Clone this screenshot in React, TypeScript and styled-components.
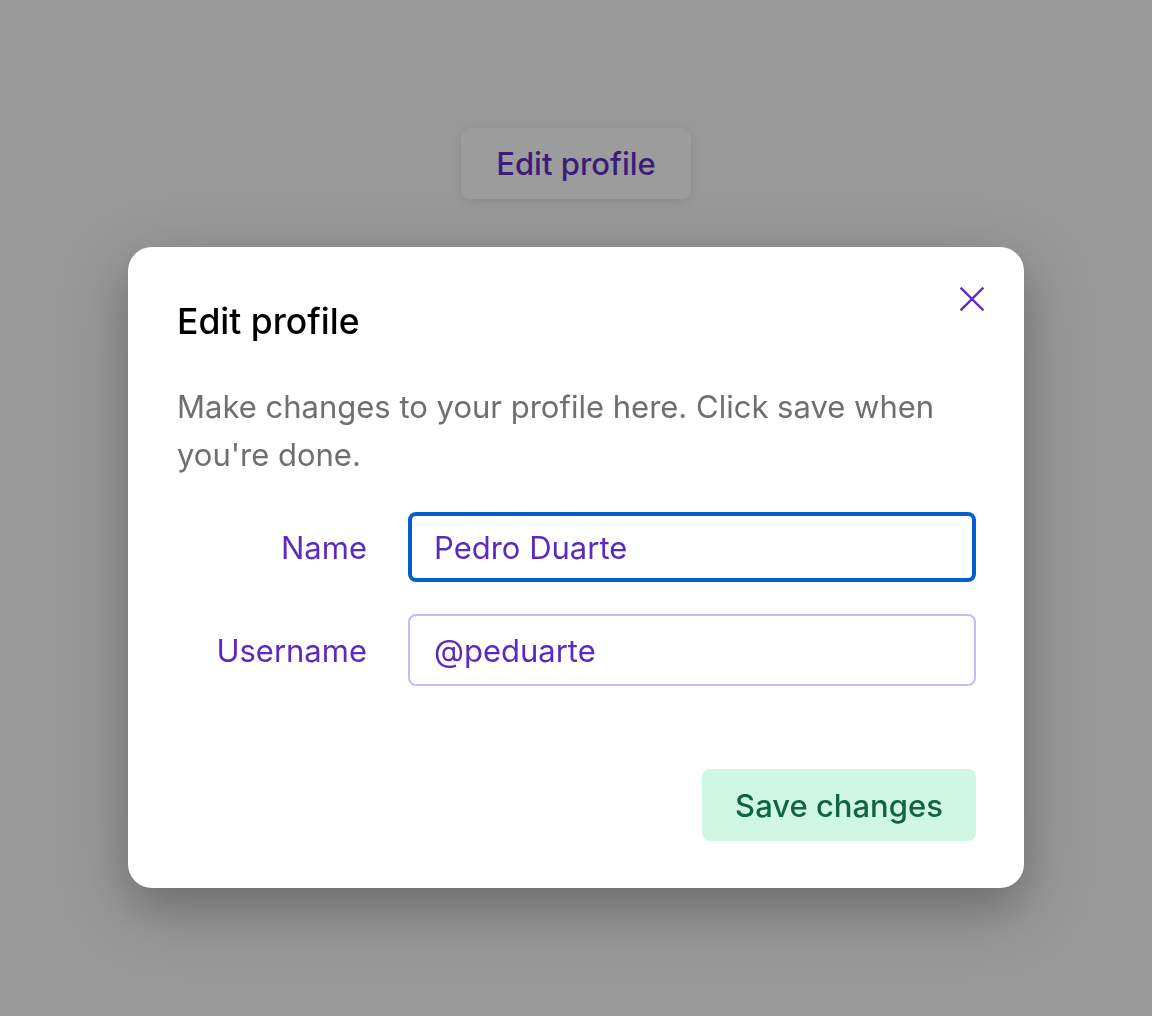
import React from "react";
import styled, { createGlobalStyle } from "styled-components";

const Global = createGlobalStyle`
  html, body { margin: 0; padding: 0; }
  body {
    background: #999999;
    font-family: Inter, "Noto Sans", sans-serif;
    width: 1152px;
    height: 1016px;
    overflow: hidden;
  }
  * { box-sizing: border-box; }
`;

const Page = styled.div`
  display: flex;
  justify-content: center;
  padding-top: 128px;
  height: 1016px;
`;

const Trigger = styled.button`
  height: 71px;
  width: 230px;
  padding: 0;
  border: none;
  border-radius: 9px;
  background: #9c9c9c;
  color: #3b1c78;
  font-family: inherit;
  font-size: 31px;
  font-weight: 500;
  box-shadow: 0 2px 10px rgba(0, 0, 0, 0.1);
  cursor: pointer;
`;

const Dialog = styled.div`
  position: fixed;
  left: 128px;
  top: 247px;
  width: 896px;
  height: 641px;
  background: #ffffff;
  border-radius: 24px;
  padding: 50px 48px 47px 49px;
  box-shadow: 0 20px 70px rgba(0, 0, 0, 0.22), 0 20px 40px rgba(0, 0, 0, 0.12);
  display: flex;
  flex-direction: column;
`;

const Title = styled.h2`
  margin: 0;
  font-size: 35.5px;
  font-weight: 500;
  line-height: 50px;
  color: #000000;
`;

const Description = styled.p`
  margin: 36px 0 33px;
  font-size: 31px;
  line-height: 48px;
  color: #6f6f6f;
`;

const Fieldset = styled.div`
  display: flex;
  align-items: center;
  gap: 41px;
  margin-bottom: 32px;
`;

const Label = styled.label`
  width: 190px;
  text-align: right;
  font-size: 31px;
  color: #5b2bbf;
`;

const Input = styled.div<{ $focused?: boolean }>`
  flex: 1;
  height: ${(p) => (p.$focused ? "70px" : "72px")};
  display: flex;
  align-items: center;
  border-radius: 8px;
  font-size: 31px;
  color: #5b2bbf;
  border: ${(p) => (p.$focused ? "4px solid #0060d0" : "2px solid #c9b9fb")};
  padding: 0 ${(p) => (p.$focused ? "22px" : "24px")};
`;

const Footer = styled.div`
  margin-top: auto;
  display: flex;
  justify-content: flex-end;
`;

const SaveButton = styled.button`
  height: 72px;
  width: 274px;
  border: none;
  border-radius: 8px;
  background: #cff7e3;
  color: #0f6447;
  font-family: inherit;
  font-size: 31px;
  font-weight: 500;
`;

const CloseButton = styled.button`
  position: absolute;
  top: 38px;
  right: 38px;
  width: 28px;
  height: 28px;
  padding: 0;
  border: none;
  background: transparent;
  display: flex;
  align-items: center;
  justify-content: center;
  color: #5b2bc4;
`;

export default function App() {
  return (
    <>
      <Global />
      <Page>
        <Trigger>Edit profile</Trigger>
      </Page>
      <Dialog>
        <Title>Edit profile</Title>
        <Description>
          Make changes to your profile here. Click save when you're done.
        </Description>
        <Fieldset>
          <Label>Name</Label>
          <Input $focused>Pedro Duarte</Input>
        </Fieldset>
        <Fieldset>
          <Label>Username</Label>
          <Input>@peduarte</Input>
        </Fieldset>
        <Footer>
          <SaveButton>Save changes</SaveButton>
        </Footer>
        <CloseButton aria-label="Close">
          <svg width="24" height="24" viewBox="0 0 24 24" fill="none">
            <path d="M1.5 1.5 L22.5 22.5 M22.5 1.5 L1.5 22.5" stroke="currentColor" strokeWidth="2.4" strokeLinecap="square" />
          </svg>
        </CloseButton>
      </Dialog>
    </>
  );
}
